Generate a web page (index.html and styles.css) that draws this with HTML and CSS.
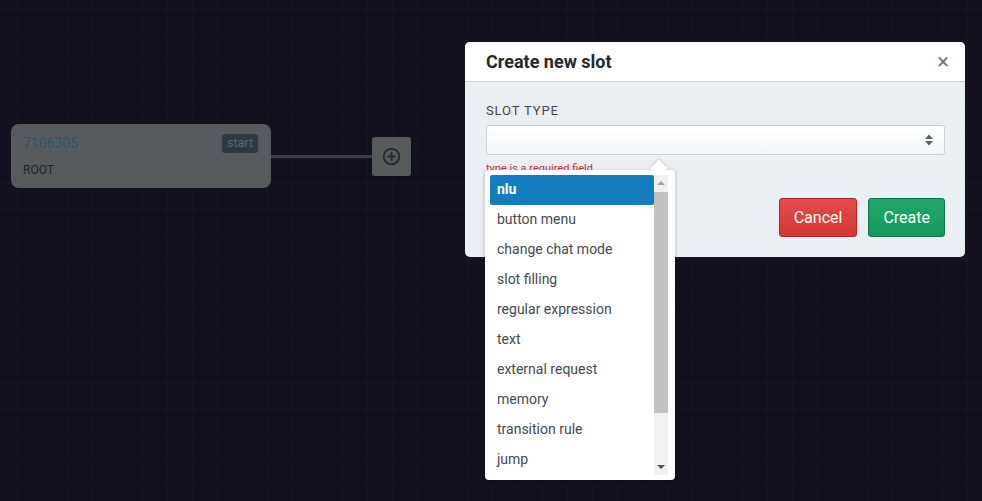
FILE: index.html
```html
<!DOCTYPE html>
<html lang="en">
<head>
    <meta charset="UTF-8">
    <meta name="viewport" content="width=device-width, initial-scale=1.0">
    <title>Create new slot</title>
    <link rel="stylesheet" href="styles.css">
</head>
<body>
    <div class="canvas">
        <div class="node node-root">
            <div class="node-head">
                <span class="node-id">7106305</span>
                <span class="node-badge">start</span>
            </div>
            <div class="node-name">ROOT</div>
        </div>
        <div class="edge"></div>
        <div class="add-node">
            <svg width="19" height="19" viewBox="0 0 20 20">
                <circle cx="10" cy="10" r="8.2" fill="none" stroke="currentColor" stroke-width="2"/>
                <path d="M10 5.5v9M5.5 10h9" stroke="currentColor" stroke-width="2.2"/>
            </svg>
        </div>
    </div>

    <div class="modal">
        <div class="modal-header">
            <div class="modal-title">Create new slot</div>
            <span class="modal-close">&times;</span>
        </div>
        <div class="modal-body">
            <label class="field-label">SLOT TYPE</label>
            <div class="select">
                <span class="select-arrows">
                    <svg width="10" height="14" viewBox="0 0 10 14">
                        <path d="M1 6 L5 1.5 L9 6Z M1 8 L5 12.5 L9 8Z" fill="#56616b"/>
                    </svg>
                </span>
            </div>
            <div class="field-error">type is a required field</div>
            <div class="modal-actions">
                <button class="btn btn-cancel">Cancel</button>
                <button class="btn btn-create">Create</button>
            </div>

            <div class="dropdown">
                <div class="dropdown-list">
                    <div class="dropdown-item active">nlu</div>
                    <div class="dropdown-item">button menu</div>
                    <div class="dropdown-item">change chat mode</div>
                    <div class="dropdown-item">slot filling</div>
                    <div class="dropdown-item">regular expression</div>
                    <div class="dropdown-item">text</div>
                    <div class="dropdown-item">external request</div>
                    <div class="dropdown-item">memory</div>
                    <div class="dropdown-item">transition rule</div>
                    <div class="dropdown-item">jump</div>
                </div>
                <div class="scrollbar">
                    <span class="scroll-up"></span>
                    <span class="scroll-thumb"></span>
                    <span class="scroll-down"></span>
                </div>
            </div>
        </div>
    </div>
</body>
</html>
```

FILE: styles.css
```css
html, body {
    margin: 0;
    height: 100%;
}

body {
    font-family: Roboto, "Liberation Sans", Arial, sans-serif;
    background-color: #13111f;
    background-image:
        linear-gradient(to right, #181625 1px, transparent 1px),
        linear-gradient(to bottom, #181625 1px, transparent 1px);
    background-size: 25px 25px;
    background-position: 17px 8px;
    overflow: hidden;
    position: relative;
}

.canvas {
    position: absolute;
    inset: 0;
}

.node {
    position: absolute;
    left: 11px;
    top: 124px;
    width: 260px;
    height: 64px;
    box-sizing: border-box;
    padding: 9px 13px 0 12px;
    background-color: #575b5e;
    border-radius: 8px;
}

.node-head {
    display: flex;
    justify-content: space-between;
    align-items: center;
    height: 20px;
}

.node-id {
    font-size: 14px;
    color: #2a5473;
}

.node-badge {
    font-size: 12.5px;
    color: #5e6a70;
    background-color: #2c3a42;
    border-radius: 3px;
    padding: 1px 5px 2px;
    line-height: 16px;
}

.node-name {
    margin-top: 10px;
    font-size: 12px;
    color: #1d2124;
}

.edge {
    position: absolute;
    left: 271px;
    top: 155px;
    width: 101px;
    height: 3px;
    background-color: #3e3f46;
}

.add-node {
    position: absolute;
    left: 372px;
    top: 137px;
    width: 39px;
    height: 39px;
    border-radius: 3px;
    background-color: #575b5e;
    display: flex;
    align-items: center;
    justify-content: center;
    color: #26292c;
}

.modal {
    position: absolute;
    left: 465px;
    top: 42px;
    width: 500px;
    border-radius: 5px;
    background-color: #eaeff3;
}

.modal-header {
    height: 40px;
    box-sizing: border-box;
    padding: 0 16px 0 21px;
    display: flex;
    align-items: center;
    justify-content: space-between;
    background-color: #ffffff;
    border-bottom: 1px solid #c6cdd3;
    border-radius: 5px 5px 0 0;
}

.modal-title {
    font-size: 18px;
    font-weight: 700;
    color: #23292e;
}

.modal-close {
    font-size: 22px;
    color: #6a7884;
    line-height: 1;
    margin-top: 1px;
}

.modal-body {
    position: relative;
    padding: 21px 20px 20px 21px;
}

.field-label {
    display: block;
    font-size: 13px;
    letter-spacing: 0.9px;
    color: #3f464c;
    line-height: 16px;
    margin-bottom: 6px;
}

.select {
    height: 30px;
    box-sizing: border-box;
    border: 1px solid #c9ced3;
    border-radius: 3px;
    background: linear-gradient(#ffffff, #f3f5f7);
    display: flex;
    align-items: center;
    justify-content: flex-end;
    padding-right: 10px;
}

.select-arrows {
    display: flex;
}

.field-error {
    font-size: 11px;
    color: #c9302c;
    margin-top: 7px;
    line-height: 13px;
}

.modal-actions {
    display: flex;
    justify-content: flex-end;
    gap: 11px;
    margin-top: 23px;
}

.btn {
    height: 39px;
    padding: 0 14px;
    font-family: Roboto, "Liberation Sans", Arial, sans-serif;
    font-size: 16px;
    color: #ffffff;
    border-radius: 3px;
    cursor: pointer;
}

.btn-cancel {
    background: linear-gradient(#e24b4b, #d93636);
    border: 1px solid #ad2a2a;
}

.btn-create {
    background: linear-gradient(#22a56c, #139a5e);
    border: 1px solid #0f7447;
}

.dropdown {
    position: absolute;
    left: 20px;
    top: 88px;
    width: 190px;
    height: 310px;
    box-sizing: border-box;
    padding: 5px 7px 5px 5px;
    background-color: #ffffff;
    border-radius: 4px;
    box-shadow: 0 1px 4px rgba(0, 0, 0, 0.25);
    display: flex;
}

.dropdown::before {
    content: "";
    position: absolute;
    right: 10px;
    top: -8px;
    width: 12px;
    height: 12px;
    background-color: #ffffff;
    transform: rotate(45deg);
    box-shadow: -1px -1px 2px rgba(0, 0, 0, 0.12);
}

.dropdown-list {
    flex: 1;
    position: relative;
}

.dropdown-item {
    height: 30px;
    line-height: 29px;
    padding-left: 7px;
    font-size: 14px;
    color: #454a4e;
    border-radius: 2px;
}

.dropdown-item.active {
    background-color: #137dbf;
    color: #ffffff;
    font-weight: 700;
}

.scrollbar {
    width: 14px;
    background-color: #f1f1f1;
    display: flex;
    flex-direction: column;
    align-items: center;
    position: relative;
}

.scroll-up,
.scroll-down {
    width: 0;
    height: 0;
    border-left: 4px solid transparent;
    border-right: 4px solid transparent;
}

.scroll-up {
    margin-top: 6px;
    border-bottom: 4px solid #a3a3a3;
}

.scroll-thumb {
    width: 14px;
    height: 221px;
    margin-top: 7px;
    background-color: #c1c1c1;
}

.scroll-down {
    margin-top: auto;
    margin-bottom: 6px;
    border-top: 4px solid #505050;
}
```
